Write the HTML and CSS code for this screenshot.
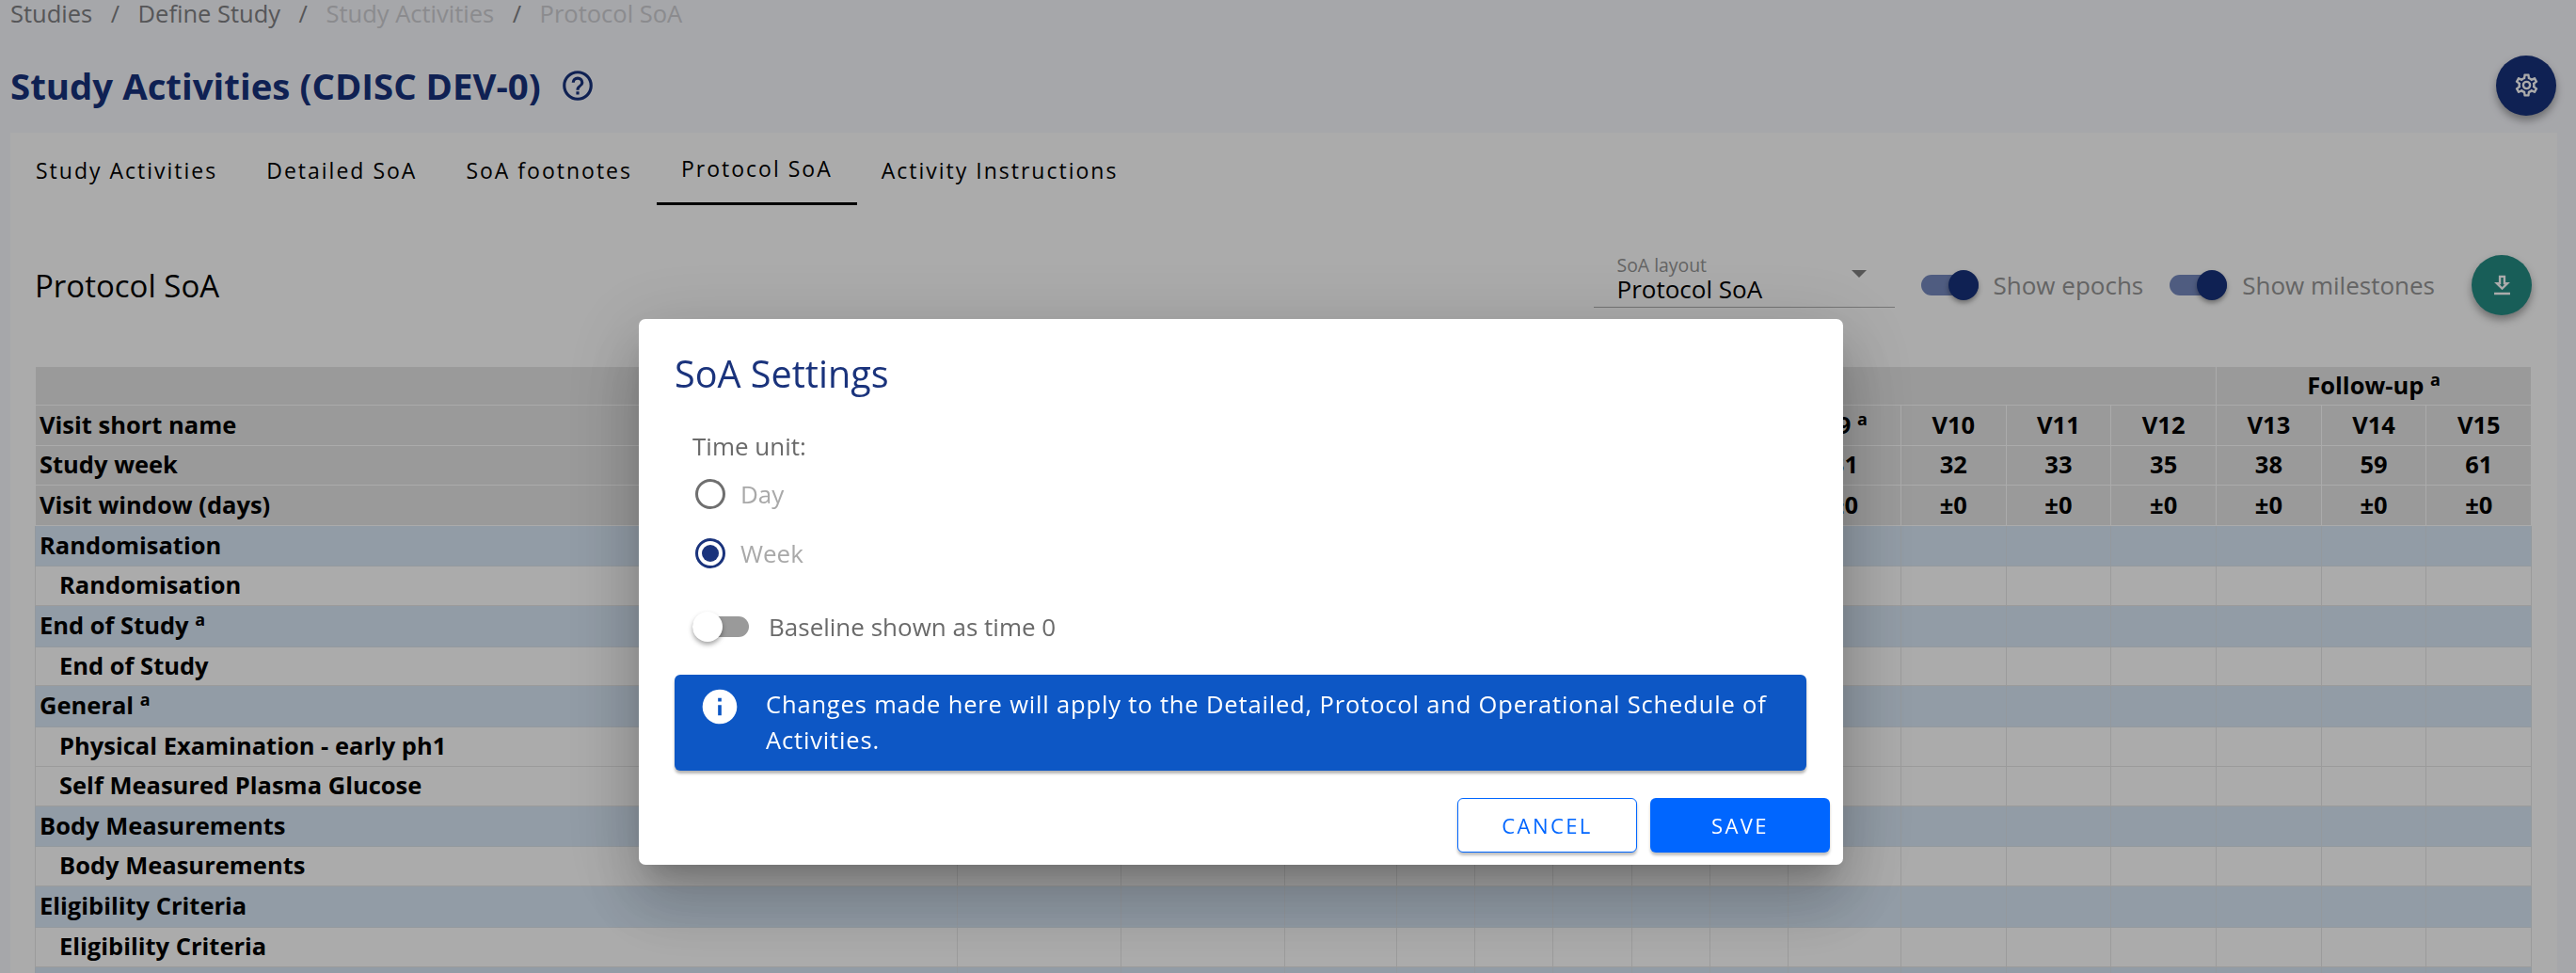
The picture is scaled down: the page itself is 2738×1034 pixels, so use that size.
FILE: index.html
```html
<!DOCTYPE html>
<html lang="en">
<head>
<meta charset="utf-8">
<title>Protocol SoA</title>
<link rel="stylesheet" href="styles.css">
</head>
<body>
<div class="page">
  <nav class="crumbs">
    <span class="crumb">Studies</span><span class="sep">/</span>
    <span class="crumb">Define Study</span><span class="sep">/</span>
    <span class="crumb off">Study Activities</span><span class="sep">/</span>
    <span class="crumb off">Protocol SoA</span>
  </nav>
  <header class="head">
    <h1 class="title">Study Activities (CDISC DEV-0)</h1>
    <svg class="help" viewBox="0 0 24 24"><path d="M11,18H13V16H11V18M12,2A10,10 0 0,0 2,12A10,10 0 0,0 12,22A10,10 0 0,0 22,12A10,10 0 0,0 12,2M12,20C7.59,20 4,16.41 4,12C4,7.59 7.59,4 12,4C16.41,4 20,7.59 20,12C20,16.41 16.41,20 12,20M12,6A4,4 0 0,0 8,10H10A2,2 0 0,1 12,8A2,2 0 0,1 14,10C14,12 11,11.75 11,15H13C13,12.75 16,12.5 16,10A4,4 0 0,0 12,6Z"/></svg>
    <span class="fab fab-navy"><svg class="fab-icon" viewBox="0 0 24 24"><path d="M12,8A4,4 0 0,1 16,12A4,4 0 0,1 12,16A4,4 0 0,1 8,12A4,4 0 0,1 12,8M12,10A2,2 0 0,0 10,12A2,2 0 0,0 12,14A2,2 0 0,0 14,12A2,2 0 0,0 12,10M10,22C9.75,22 9.54,21.82 9.5,21.58L9.13,18.93C8.5,18.68 7.96,18.34 7.44,17.94L4.95,18.95C4.73,19.03 4.46,18.95 4.34,18.73L2.34,15.27C2.21,15.05 2.27,14.78 2.46,14.63L4.57,12.97L4.5,12L4.57,11L2.46,9.37C2.27,9.22 2.21,8.95 2.34,8.73L4.34,5.27C4.46,5.05 4.73,4.96 4.95,5.05L7.44,6.05C7.96,5.66 8.5,5.32 9.13,5.07L9.5,2.42C9.54,2.18 9.75,2 10,2H14C14.25,2 14.46,2.18 14.5,2.42L14.87,5.07C15.5,5.32 16.04,5.66 16.56,6.05L19.05,5.05C19.27,4.96 19.54,5.05 19.66,5.27L21.66,8.73C21.79,8.95 21.73,9.22 21.54,9.37L19.43,11L19.5,12L19.43,13L21.54,14.63C21.73,14.78 21.79,15.05 21.66,15.27L19.66,18.73C19.54,18.95 19.27,19.04 19.05,18.95L16.56,17.95C16.04,18.34 15.5,18.68 14.87,18.93L14.5,21.58C14.46,21.82 14.25,22 14,22H10M11.25,4L10.88,6.61C9.68,6.86 8.62,7.5 7.85,8.39L5.44,7.35L4.69,8.65L6.8,10.2C6.4,11.37 6.4,12.64 6.8,13.8L4.68,15.36L5.43,16.66L7.86,15.62C8.63,16.5 9.68,17.14 10.87,17.38L11.24,20H12.76L13.13,17.39C14.32,17.14 15.37,16.5 16.14,15.62L18.57,16.66L19.32,15.36L17.2,13.81C17.6,12.64 17.6,11.37 17.2,10.2L19.31,8.65L18.56,7.35L16.15,8.39C15.38,7.5 14.32,6.86 13.12,6.62L12.75,4H11.25Z"/></svg></span>
  </header>
  <main class="card">
    <div class="tabs">
      <span class="tab">Study Activities</span>
      <span class="tab">Detailed SoA</span>
      <span class="tab">SoA footnotes</span>
      <span class="tab active">Protocol SoA</span>
      <span class="tab">Activity Instructions</span>
    </div>
    <div class="toolbar">
      <h2 class="sub">Protocol SoA</h2>
      <div class="select">
        <span class="select-label">SoA layout</span>
        <span class="select-value">Protocol SoA</span>
        <span class="select-arrow"></span>
      </div>
      <div class="switch-row first"><span class="switch on"><span class="knob"></span></span><span class="switch-text">Show epochs</span></div>
      <div class="switch-row second"><span class="switch on"><span class="knob"></span></span><span class="switch-text">Show milestones</span></div>
      <span class="fab fab-teal"><svg class="fab-icon" viewBox="0 0 24 24"><path d="M13,5V11H14.17L12,13.17L9.83,11H11V5H13M15,3H9V9H5L12,16L19,9H15V3M19,18H5V20H19V18Z"/></svg></span>
    </div>
    <table class="soa">
      <colgroup>
        <col class="c0"><col class="c1"><col class="c1"><col class="c2"><col class="c3"><col class="c3"><col class="c3"><col class="c3"><col class="c3"><col class="c4"><col class="c5"><col class="c5"><col class="c5"><col class="c5"><col class="c5"><col class="c5">
      </colgroup>
      <thead>
        <tr class="r41"><th colspan="13"></th><th colspan="3">Follow-up <sup>a</sup></th></tr>
        <tr class="r43"><th class="lab">Visit short name</th><th></th><th></th><th></th><th></th><th></th><th></th><th></th><th></th><th>V9 <sup>a</sup></th><th>V10</th><th>V11</th><th>V12</th><th>V13</th><th>V14</th><th>V15</th></tr>
        <tr class="r42"><th class="lab">Study week</th><th></th><th></th><th></th><th></th><th></th><th></th><th></th><th></th><th>31</th><th>32</th><th>33</th><th>35</th><th>38</th><th>59</th><th>61</th></tr>
        <tr class="r43"><th class="lab">Visit window (days)</th><th></th><th></th><th></th><th></th><th></th><th></th><th></th><th></th><th>±0</th><th>±0</th><th>±0</th><th>±0</th><th>±0</th><th>±0</th><th>±0</th></tr>
      </thead>
      <tbody>
        <tr class="group r43"><td>Randomisation</td><td></td><td></td><td></td><td></td><td></td><td></td><td></td><td></td><td></td><td></td><td></td><td></td><td></td><td></td><td></td></tr>
        <tr class="r42"><td class="sub-row">Randomisation</td><td></td><td></td><td></td><td></td><td></td><td></td><td></td><td></td><td></td><td></td><td></td><td></td><td></td><td></td><td></td></tr>
        <tr class="group r44"><td>End of Study <sup>a</sup></td><td></td><td></td><td></td><td></td><td></td><td></td><td></td><td></td><td></td><td></td><td></td><td></td><td></td><td></td><td></td></tr>
        <tr class="r41"><td class="sub-row">End of Study</td><td></td><td></td><td></td><td></td><td></td><td></td><td></td><td></td><td></td><td></td><td></td><td></td><td></td><td></td><td></td></tr>
        <tr class="group r44"><td>General <sup>a</sup></td><td></td><td></td><td></td><td></td><td></td><td></td><td></td><td></td><td></td><td></td><td></td><td></td><td></td><td></td><td></td></tr>
        <tr class="r42"><td class="sub-row">Physical Examination - early ph1</td><td></td><td></td><td></td><td></td><td></td><td></td><td></td><td></td><td></td><td></td><td></td><td></td><td></td><td></td><td></td></tr>
        <tr class="r42"><td class="sub-row">Self Measured Plasma Glucose</td><td></td><td></td><td></td><td></td><td></td><td></td><td></td><td></td><td></td><td></td><td></td><td></td><td></td><td></td><td></td></tr>
        <tr class="group r43"><td>Body Measurements</td><td></td><td></td><td></td><td></td><td></td><td></td><td></td><td></td><td></td><td></td><td></td><td></td><td></td><td></td><td></td></tr>
        <tr class="r42"><td class="sub-row">Body Measurements</td><td></td><td></td><td></td><td></td><td></td><td></td><td></td><td></td><td></td><td></td><td></td><td></td><td></td><td></td><td></td></tr>
        <tr class="group r44"><td>Eligibility Criteria</td><td></td><td></td><td></td><td></td><td></td><td></td><td></td><td></td><td></td><td></td><td></td><td></td><td></td><td></td><td></td></tr>
        <tr class="r42"><td class="sub-row">Eligibility Criteria</td><td></td><td></td><td></td><td></td><td></td><td></td><td></td><td></td><td></td><td></td><td></td><td></td><td></td><td></td><td></td></tr>
        <tr class="group r43"><td></td><td></td><td></td><td></td><td></td><td></td><td></td><td></td><td></td><td></td><td></td><td></td><td></td><td></td><td></td><td></td></tr>
      </tbody>
    </table>
  </main>
</div>
<div class="scrim">
  <section class="dialog">
    <h2 class="dialog-title">SoA Settings</h2>
    <div class="dialog-body">
      <div class="field-label">Time unit:</div>
      <div class="radio"><span class="radio-mark"></span><span class="radio-text">Day</span></div>
      <div class="radio"><span class="radio-mark checked"></span><span class="radio-text">Week</span></div>
      <div class="base-row"><span class="switch off"><span class="knob"></span></span><span class="base-text">Baseline shown as time 0</span></div>
    </div>
    <div class="alert">
      <svg class="alert-icon" viewBox="0 0 24 24"><path d="M13,9H11V7H13M13,17H11V11H13M12,2A10,10 0 0,0 2,12A10,10 0 0,0 12,22A10,10 0 0,0 22,12A10,10 0 0,0 12,2Z"/></svg>
      <p class="alert-text">Changes made here will apply to the Detailed, Protocol and Operational Schedule of Activities.</p>
    </div>
    <div class="actions">
      <button class="btn btn-line">CANCEL</button>
      <button class="btn btn-fill">SAVE</button>
    </div>
  </section>
</div>
</body>
</html>
```
FILE: styles.css
```css
* { box-sizing: border-box; }
html, body { margin: 0; height: 1034px; overflow: hidden; }
body { background: #f8f9fe; font-family: "Open Sans", "Noto Sans", sans-serif; color: #000; }
.page { width: 2738px; height: 1034px; overflow: hidden; }

.crumbs { display: flex; align-items: center; height: 28px; padding-left: 11px; font-size: 25.5px; line-height: 28px; }
.crumb { color: #808184; }
.crumb.off { color: #cfd0d4; }
.sep { margin: 0 19.5px; color: #808184; }

.head { display: flex; align-items: center; height: 113px; padding: 12px 21px 0 11px; }
.title { margin: 0; font-size: 38.4px; font-weight: 700; color: #17327c; }
.help { width: 38px; height: 38px; margin-left: 20px; fill: #17327c; }
.fab { display: flex; align-items: center; justify-content: center; width: 64px; height: 64px; border-radius: 50%; box-shadow: 0 5px 9px rgba(0,0,0,.35); }
.head .fab { margin-left: auto; }
.fab-navy { background: #17327c; }
.fab-teal { background: #248c84; margin-left: 39px; }
.fab-icon { width: 29px; height: 29px; fill: #fff; }

.card { margin-left: 11px; width: 2707px; height: 893px; background: #fff; overflow: hidden; }
.tabs { display: flex; height: 78px; padding-left: 1px; }
.tab { display: flex; align-items: center; padding: 2px 26px 0; height: 77px; font-size: 23px; letter-spacing: 2px; font-weight: 400; }
.tab.active { border-bottom: 3px solid #000; }

.toolbar { display: flex; align-items: center; height: 168px; padding: 0 27px 0 26px; }
.sub { margin: 0; flex: 1; font-size: 33px; font-weight: 400; }
.select { position: relative; width: 320px; height: 66px; border-bottom: 1px solid #b0b0b0; padding-left: 25px; margin-right: 28px; margin-top: -18px; }
.select-label { display: block; font-size: 19.4px; line-height: 24px; margin-top: 9px; color: #959595; }
.select-value { display: block; font-size: 26px; line-height: 26px; }
.select-arrow { position: absolute; right: 30px; top: 26px; width: 0; height: 0; border-left: 8px solid transparent; border-right: 8px solid transparent; border-top: 8px solid #808080; }
.switch-row { display: flex; align-items: center; }
.switch-row.second { margin-left: 28px; }
.switch-text { margin-left: 16px; font-size: 26px; color: #959595; }
.switch { position: relative; display: block; width: 61px; height: 22px; border-radius: 11px; }
.switch.on { background: #7689bf; }
.switch.off { background: #9a9a9a; width: 60px; }
.knob { position: absolute; top: -5px; width: 32px; height: 32px; border-radius: 50%; box-shadow: 0 3px 5px rgba(0,0,0,.35); }
.on .knob { right: 0; background: #17327c; }
.off .knob { left: 0; background: #fff; }

.soa { width: 2653px; margin: 2px 0 0 26px; border-collapse: collapse; table-layout: fixed; font-size: 25.5px; font-weight: 700; }
.c0 { width: 980px; } .c1 { width: 174px; } .c2 { width: 119px; } .c3 { width: 83.2px; } .c4 { width: 120px; } .c5 { width: 111.67px; }
.soa th { background: #e6e6e6; border: 1px solid #fff; text-align: center; font-weight: 700; padding: 0 0 3px; line-height: 30px; }
.soa th.lab { text-align: left; padding-left: 4px; }
.soa td { border: 1px solid #e8e8e8; padding: 0 0 3px 4px; line-height: 30px; white-space: nowrap; }
.soa td.sub-row { padding-left: 25px; }
.group td { background: #dae9f8; border-color: #dce4ec; }
.soa sup { font-size: 18px; line-height: 0; vertical-align: 9px; }
.r41 { height: 41px; } .r42 { height: 42px; } .r43 { height: 43px; } .r44 { height: 44px; }

.scrim { position: fixed; inset: 0; background: rgba(0,0,0,.33); }
.dialog { position: absolute; left: 679px; top: 339px; width: 1280px; height: 580px; background: #fff; border-radius: 7px; padding: 0 14px 0 38px; box-shadow: 0 19px 26px -12px rgba(0,0,0,.2), 0 42px 66px 5px rgba(0,0,0,.14), 0 16px 80px 14px rgba(0,0,0,.12); }
.dialog-title { margin: 0; padding-top: 35px; font-size: 39.6px; line-height: 46px; font-weight: 400; color: #1a337c; }
.dialog-body { padding-left: 19px; margin-top: 38px; }
.field-label { font-size: 26px; line-height: 32px; color: #6a6a6a; }
.radio { display: flex; align-items: center; height: 32px; margin-bottom: 31px; margin-top: 19px; padding-left: 3px; }
.radio + .radio { margin-top: 0; margin-bottom: 46px; }
.radio-mark { position: relative; width: 32px; height: 32px; border: 3px solid #6f6f6f; border-radius: 50%; margin-right: 16px; }
.radio-mark.checked { border-color: #1a337c; }
.radio-mark.checked::after { content: ""; position: absolute; inset: 4px; border-radius: 50%; background: #1a337c; }
.radio-text { font-size: 26px; color: #a9a9a9; }
.base-row { display: flex; align-items: center; height: 32px; }
.base-text { margin-left: 21px; font-size: 26px; color: #6a6a6a; }
.alert { display: flex; align-items: flex-start; width: 1203px; height: 102px; margin-top: 35px; background: #0d57c5; border-radius: 6px; box-shadow: 0 3px 3px rgba(0,0,0,.3); padding: 12px 30px 0 26px; color: #fff; }
.alert-icon { flex: none; width: 44px; height: 44px; fill: #fff; }
.alert-text { margin: 0 0 0 27px; font-size: 25.5px; line-height: 38px; letter-spacing: .84px; }
.actions { display: flex; justify-content: flex-end; gap: 14px; margin-top: 29px; }
.btn { width: 191px; height: 58px; border-radius: 6px; font-family: inherit; font-size: 22px; letter-spacing: 2.4px; box-shadow: 0 3px 3px rgba(0,0,0,.25); }
.btn-line { background: #fff; color: #0066ff; border: 1.5px solid #0066ff; }
.btn-fill { background: #0066ff; color: #fff; border: 0; }
```
